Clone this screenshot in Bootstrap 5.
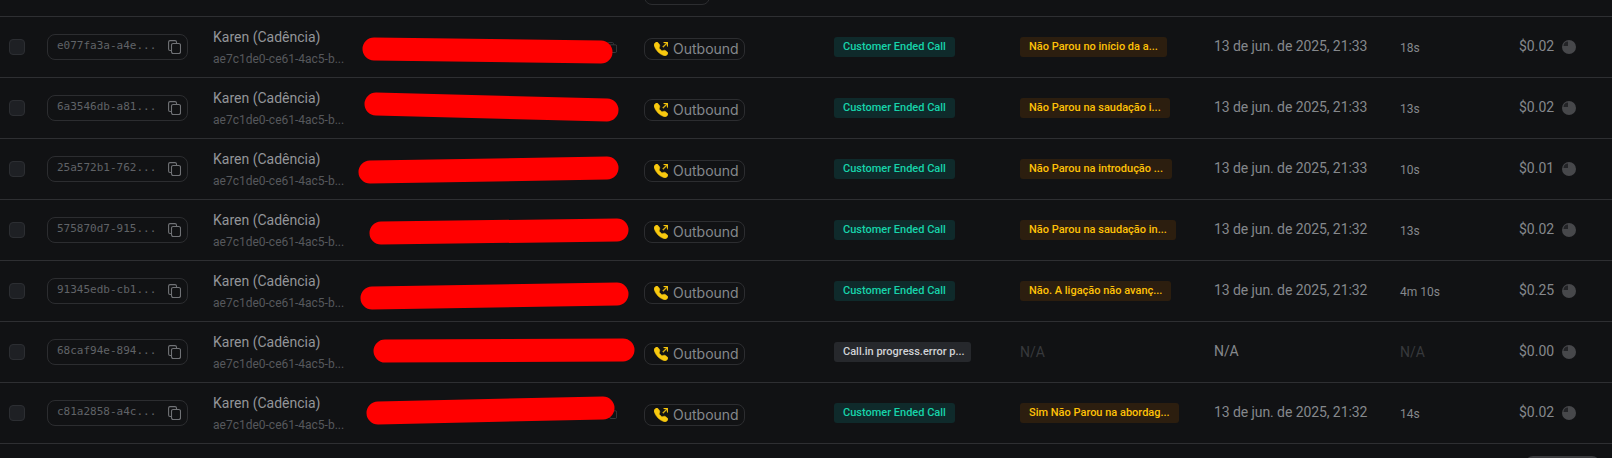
<!DOCTYPE html>
<html lang="pt-br">
<head>
  <meta charset="UTF-8">
  <title>Chamadas</title>
  <meta name="viewport" content="width=device-width, initial-scale=1">
  <link href="https://cdn.jsdelivr.net/npm/bootstrap@5.3.0/dist/css/bootstrap.min.css" rel="stylesheet">
  <script src="https://cdn.jsdelivr.net/npm/bootstrap@5.3.0/dist/js/bootstrap.bundle.min.js"></script>
  <style>
    html, body { height: 458px; overflow: hidden; }
    body { background: #111214; font-family: Roboto, "Noto Sans", sans-serif; color: #8b8e92; }
    .calls-wrap { width: 1612px; }
    .calls-table { width: 1612px; table-layout: fixed; --bs-table-bg: transparent; --bs-table-color: #8b8e92; --bs-table-border-color: #2e2f32; }
    .calls-table td { height: 61px; white-space: nowrap; }
    .calls-table tr.cut-row td { height: 16px; }
    .cut-box { height: 15px; overflow: hidden; }
    .call-check.form-check-input { width: 16px; height: 16px; margin: 0 0 0 9px; background-color: #1e2024; border: 1px solid #2c2e32; border-radius: 4px; float: none; display: block; }
    .id-box { width: 141px; height: 26px; border: 1px solid #2c2d30; border-radius: 8px; padding: 0 6px 0 9px; }
    .id-text { font-family: "DejaVu Sans Mono", monospace; font-size: 11px; color: #606367; }
    .name-block { padding-top: 2px; }
    .name-main { font-size: 14px; line-height: 20px; color: #939599; margin-bottom: 2px; }
    .name-sub { font-size: 12px; line-height: 20px; color: #56585c; }
    .phone-copy { padding: 2px 27px 0 0; }
    .phone-copy svg { width: 10px; height: 11px; }
    .dir-pill { width: fit-content; height: 22px; padding: 0 5px 0 9px; margin-top: 4px; border: 1px solid #2c2d30; border-radius: 8px; font-family: Inter, sans-serif; font-size: 14px; color: #85888c; gap: 5px; }
    .dir-pill-cut { width: 66px; margin-top: -17px; }
    .tag-pill { width: fit-content; height: 20px; line-height: 20px; padding: 0 9px; border-radius: 3px; font-size: 11px; font-weight: 500; }
    .tag-green { background: #0f2a2b; color: #17d3aa; }
    .tag-gray { background: #26282c; color: #d0d3d7; padding-right: 6px; }
    .tag-yellow { background: #2c1e0f; color: #ffc107; }
    .text-none { font-size: 14px; color: #37393c; }
    .date-text { font-size: 14px; color: #85888c; letter-spacing: -.08px; }
    .dur-text { font-size: 12px; color: #85888c; }
    .cost-text { font-size: 14px; color: #85888c; }
    .scribbles { position: absolute; left: 0; top: 0; pointer-events: none; }
    .page-end { width: 75px; height: 20px; margin: 12px 12px 0 auto; background: #3a3b3e; border-radius: 8px; }
  </style>
</head>
<body>
  <div class="calls-wrap position-relative">
    <table class="table calls-table align-middle mb-0">
      <colgroup>
        <col style="width:47px"><col style="width:166px"><col style="width:149px"><col style="width:282px"><col style="width:190px">
        <col style="width:186px"><col style="width:194px"><col style="width:186px"><col style="width:119px"><col style="width:93px">
      </colgroup>
      <tbody id="rows"></tbody>
    </table>
    <svg class="scribbles" width="1612" height="458" fill="none" stroke="#ff0000" stroke-width="23" stroke-linecap="round">
      <line x1="374" y1="49" x2="601" y2="52"></line>
      <line x1="376" y1="104" x2="607" y2="110"></line>
      <line x1="370" y1="172" x2="607" y2="168"></line>
      <line x1="381" y1="233" x2="617" y2="230"></line>
      <line x1="372" y1="298" x2="617" y2="294"></line>
      <line x1="385" y1="351" x2="623" y2="350"></line>
      <line x1="378" y1="413" x2="603" y2="408"></line>
    </svg>
  </div>
  <div class="page-end"></div>

  <script>
    const calls = [
      { id: 'e077fa3a-a4e...', tag: 'Customer Ended Call', avaliacao: 'Não Parou no início da a...', data: '13 de jun. de 2025, 21:33', dur: '18s', custo: '$0.02' },
      { id: '6a3546db-a81...', tag: 'Customer Ended Call', avaliacao: 'Não Parou na saudação i...', data: '13 de jun. de 2025, 21:33', dur: '13s', custo: '$0.02' },
      { id: '25a572b1-762...', tag: 'Customer Ended Call', avaliacao: 'Não Parou na introdução ...', data: '13 de jun. de 2025, 21:33', dur: '10s', custo: '$0.01' },
      { id: '575870d7-915...', tag: 'Customer Ended Call', avaliacao: 'Não Parou na saudação in...', data: '13 de jun. de 2025, 21:32', dur: '13s', custo: '$0.02' },
      { id: '91345edb-cb1...', tag: 'Customer Ended Call', avaliacao: 'Não. A ligação não avanç...', data: '13 de jun. de 2025, 21:32', dur: '4m 10s', custo: '$0.25' },
      { id: '68caf94e-894...', tag: 'Call.in progress.error p...', avaliacao: null, data: 'N/A', dur: null, custo: '$0.00' },
      { id: 'c81a2858-a4c...', tag: 'Customer Ended Call', avaliacao: 'Sim Não Parou na abordag...', data: '13 de jun. de 2025, 21:32', dur: '14s', custo: '$0.02' }
    ];

    const copyIcon = (cor = '#707276') => `<svg width="13" height="14" viewBox="0 0 13 14" fill="none" stroke="${cor}" stroke-width="1.1"><path d="M3 10.5H2A1.5 1.5 0 0 1 .6 9V2A1.5 1.5 0 0 1 2 .6h5A1.5 1.5 0 0 1 8.500 2v1"/><rect x="3.500" y="3.500" width="9" height="10" rx="1.700"/></svg>`;
    const phoneIcon = `<svg width="14" height="14" viewBox="0 0 16 16" fill="#f8c90f" stroke="#f8c90f" stroke-width=".5"><path d="M1.885.511a1.745 1.745 0 0 1 2.61.163L6.29 2.98c.329.423.445.974.315 1.494l-.547 2.19a.678.678 0 0 0 .178.643l2.457 2.457a.678.678 0 0 0 .644.178l2.189-.547a1.745 1.745 0 0 1 1.494.315l2.306 1.794c.829.645.905 1.87.163 2.611l-1.034 1.034c-.74.74-1.846 1.065-2.877.702a18.634 18.634 0 0 1-7.01-4.42 18.634 18.634 0 0 1-4.42-7.009c-.362-1.03-.037-2.137.703-2.877L1.885.511zM11 .5a.5.5 0 0 1 .5-.5h4a.5.5 0 0 1 .5.5v4a.5.5 0 0 1-1 0V1.707l-4.146 4.147a.5.5 0 0 1-.708-.708L14.293 1H11.5a.5.5 0 0 1-.5-.5z"/></svg>`;
    const pieIcon = `<svg width="14" height="14" viewBox="0 0 14 14"><circle cx="7" cy="7" r="7" fill="#47484b"/><path d="M6 1.500V6H1.500A4.700 4.700 0 0 1 6 1.500z" fill="#232427"/></svg>`;

    const cutRow = `<tr class="cut-row"><td class="p-0" colspan="3"></td><td class="p-0"></td><td class="p-0">
      <div class="cut-box"><div class="dir-pill dir-pill-cut d-flex align-items-center">
        <svg width="12" height="12" viewBox="0 0 12 12" fill="#7a5bd6" class="ms-1"><circle cx="6" cy="6" r="5"/></svg>
      </div></div></td><td class="p-0" colspan="5"></td></tr>`;

    document.getElementById('rows').innerHTML = cutRow + calls.map(c => `
      <tr>
        <td class="p-0"><input type="checkbox" class="form-check-input call-check"></td>
        <td class="p-0">
          <div class="id-box d-flex align-items-center justify-content-between"><span class="id-text">${c.id}</span>${copyIcon()}</div>
        </td>
        <td class="p-0">
          <div class="name-block">
            <div class="name-main">Karen (Cadência)</div>
            <div class="name-sub">ae7c1de0-ce61-4ac5-b...</div>
          </div>
        </td>
        <td class="p-0"><div class="phone-copy d-flex justify-content-end">${copyIcon('#3f4043')}</div></td>
        <td class="p-0">
          <div class="dir-pill d-flex align-items-center">${phoneIcon}<span>Outbound</span></div>
        </td>
        <td class="p-0"><div class="tag-pill ${c.tag.startsWith('Customer') ? 'tag-green' : 'tag-gray'}">${c.tag}</div></td>
        <td class="p-0">${c.avaliacao ? `<div class="tag-pill tag-yellow">${c.avaliacao}</div>` : '<span class="text-none">N/A</span>'}</td>
        <td class="p-0 date-text">${c.data}</td>
        <td class="p-0">${c.dur ? `<span class="dur-text">${c.dur}</span>` : '<span class="text-none">N/A</span>'}</td>
        <td class="p-0"><div class="d-flex align-items-center gap-2"><span class="cost-text">${c.custo}</span>${pieIcon}</div></td>
      </tr>`).join('');
  </script>
</body>
</html>
